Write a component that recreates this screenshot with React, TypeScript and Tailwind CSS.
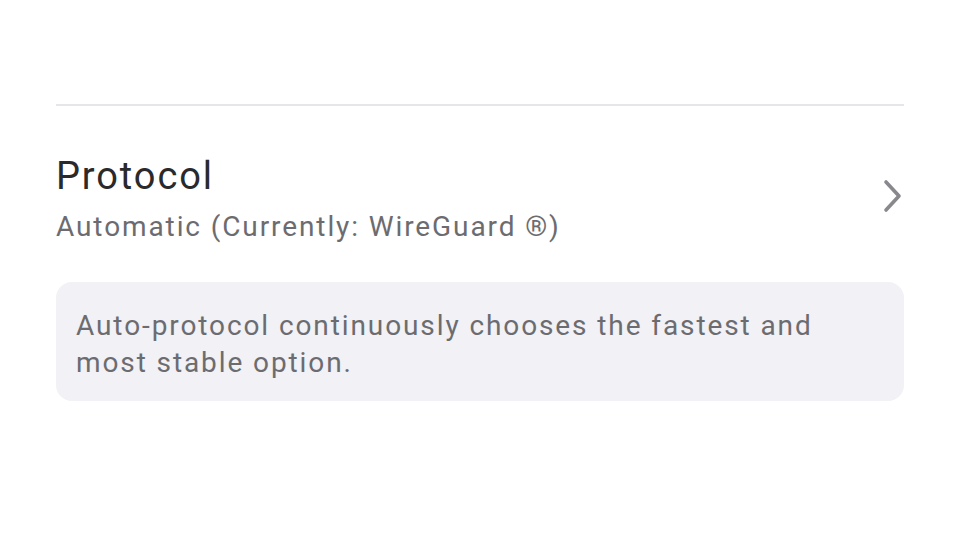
import React from 'react';

export default function App() {
  return (
    <div className="w-[960px] h-[540px] bg-white px-14 pt-[104px] font-['Roboto',sans-serif]">
      <div className="h-[2px] bg-[#e6e6ea]" />

      {/* Protocol row */}
      <div className="mt-[48px] flex items-center justify-between">
        <div className="flex flex-col gap-[11px]">
          <span className="text-[38px] leading-[44px] tracking-[1.9px] text-[#2a2a2c]">Protocol</span>
          <span className="text-[28px] leading-[36px] tracking-[1.9px] text-[#6c6c70]">
            Automatic (Currently: WireGuard ®)
          </span>
        </div>
        <svg width="24" height="36" viewBox="0 0 24 36" fill="none" className="mr-[-1px] mb-[7px]">
          <path
            d="M5 4 L18 18 L5 32"
            stroke="#88888d"
            strokeWidth="3.6"
            strokeLinecap="round"
            strokeLinejoin="round"
          />
        </svg>
      </div>

      {/* Info box */}
      <div className="mt-[37px] rounded-2xl bg-[#f1f1f6] px-5 pt-[25px] pb-[20px]">
        <p className="text-[28px] leading-[37px] tracking-[1.9px] text-[#6c6c70]">
          Auto-protocol continuously chooses the fastest and
          <br />
          most stable option.
        </p>
      </div>
    </div>
  );
}
